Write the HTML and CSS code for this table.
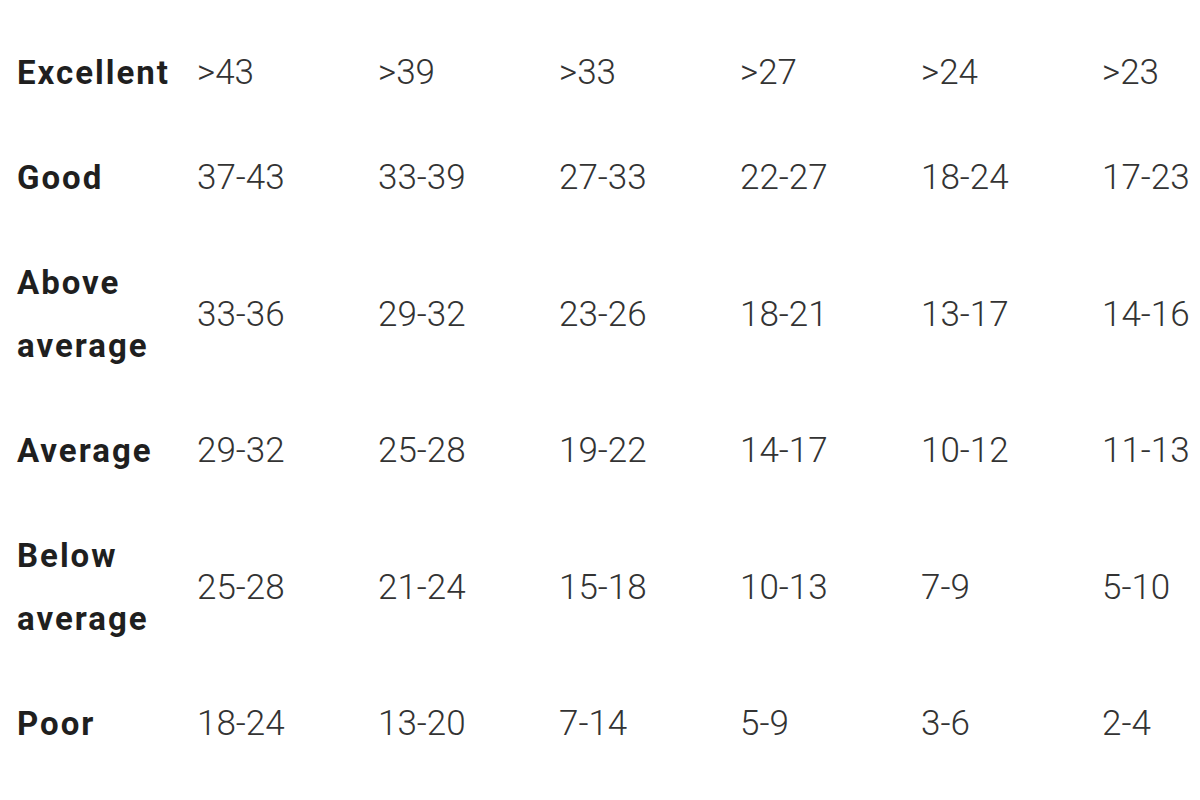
FILE: index.html
```html
<!DOCTYPE html>
<html>
<head>
<meta charset="utf-8">
<link rel="stylesheet" href="styles.css">
</head>
<body>
<table class="norms">
  <colgroup>
    <col class="c-label"><col class="c-val"><col class="c-val"><col class="c-val"><col class="c-val"><col class="c-val"><col class="c-last">
  </colgroup>
  <tbody>
    <tr><th>Excellent</th><td>&gt;43</td><td>&gt;39</td><td>&gt;33</td><td>&gt;27</td><td>&gt;24</td><td>&gt;23</td></tr>
    <tr><th>Good</th><td>37-43</td><td>33-39</td><td>27-33</td><td>22-27</td><td>18-24</td><td>17-23</td></tr>
    <tr><th>Above average</th><td>33-36</td><td>29-32</td><td>23-26</td><td>18-21</td><td>13-17</td><td>14-16</td></tr>
    <tr><th>Average</th><td>29-32</td><td>25-28</td><td>19-22</td><td>14-17</td><td>10-12</td><td>11-13</td></tr>
    <tr><th>Below average</th><td>25-28</td><td>21-24</td><td>15-18</td><td>10-13</td><td>7-9</td><td>5-10</td></tr>
    <tr><th>Poor</th><td>18-24</td><td>13-20</td><td>7-14</td><td>5-9</td><td>3-6</td><td>2-4</td></tr>
  </tbody>
</table>
</body>
</html>
```
FILE: styles.css
```css
html, body {
  margin: 0;
  padding: 0;
  background: #ffffff;
}
body {
  width: 1200px;
  height: 800px;
  overflow: hidden;
}
.norms {
  border-collapse: collapse;
  table-layout: fixed;
  width: 1183px;
  margin: 20px 0 0 17px;
  font-family: Roboto, "Liberation Sans", sans-serif;
  font-size: 33px;
  line-height: 63px;
}
.c-label { width: 180px; }
.c-val { width: 181px; }
.c-last { width: 98px; }
.norms th {
  padding: 21px 0;
  text-align: left;
  vertical-align: middle;
  font-weight: 700;
  color: #1f1f1f;
  letter-spacing: 2px;
  white-space: normal;
}
.norms td {
  padding: 21px 0;
  text-align: left;
  vertical-align: middle;
  font-weight: 300;
  font-size: 35px;
  color: #333333;
  white-space: nowrap;
}
```
